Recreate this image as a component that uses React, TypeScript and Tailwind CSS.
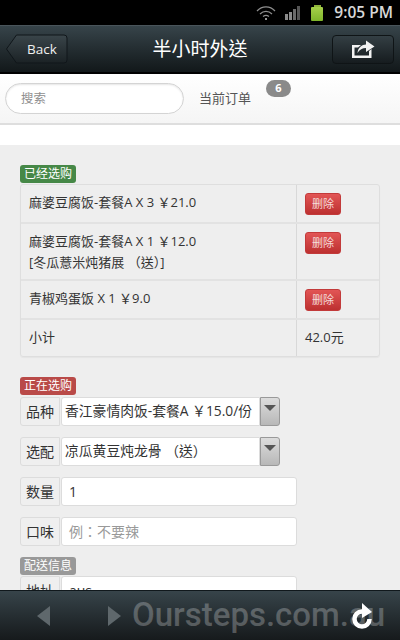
import type { ReactNode } from "react";

const font = { cjk: "font-['Open_Sans','Noto_Sans_CJK_TC',sans-serif]" };

const orderRows = [
  { lines: ["麻婆豆腐饭-套餐A X 3 ￥21.0"], height: "h-[39px]" },
  { lines: ["麻婆豆腐饭-套餐A X 1 ￥12.0", "[冬瓜薏米炖猪展 （送）]"], height: "h-[57px]" },
  { lines: ["青椒鸡蛋饭 X 1 ￥9.0"], height: "h-[39px]" }
];

function StatusBar() {
  return (
    <div className="flex h-[25px] shrink-0 items-center justify-end bg-black pr-[7px]">
      <svg className="mr-[9px]" width="20" height="16" viewBox="0 0 20 16" fill="none" stroke="#8f8f8f" strokeWidth="1.2">
        <path d="M1 6 C6 0.5 14 0.5 19 6" />
        <path d="M4 9 C7.5 5.5 12.5 5.5 16 9" />
        <path d="M7 11.5 C9 10 11 10 13 11.5" />
        <circle cx="10" cy="14" r="1" fill="#c8c8c8" stroke="none" />
      </svg>
      <div className="mr-[11px] flex h-[14px] items-end gap-px">
        <div className="h-[6px] w-[3px] bg-[#8a8a8a]" />
        <div className="h-[8px] w-[3px] bg-[#8a8a8a]" />
        <div className="h-[11px] w-[3px] bg-[#6a6a6a]" />
        <div className="h-[14px] w-[3px] bg-[#555]" />
      </div>
      <div className="mr-[11px] flex flex-col items-center">
        <div className="h-[2px] w-[7px] bg-[#8fb33a]" />
        <div className="h-[14px] w-[12px] rounded-[1px] bg-gradient-to-b from-[#a6d04a] to-[#7fb52a]" />
      </div>
      <span className="font-['Open_Sans',sans-serif] text-[15.5px] leading-none font-semibold text-[#d8d8d8]">9:05 PM</span>
    </div>
  );
}

function BackButton() {
  return (
    <div className="relative flex h-[30px] w-[62px] items-center justify-center pl-[10px] font-['Open_Sans',sans-serif] text-[13.5px] text-[#f0f0f0]">
      <svg className="absolute inset-0" width="62" height="30" viewBox="0 0 62 30">
        <defs>
          <linearGradient id="backFill" x1="0" y1="0" x2="0" y2="1">
            <stop offset="0" stopColor="#3a454a" />
            <stop offset="1" stopColor="#1b2225" />
          </linearGradient>
        </defs>
        <path d="M0.5 15 L10.5 1 H58 Q61 1 61 4 V26 Q61 29 58 29 H10.5 Z" fill="url(#backFill)" stroke="#10161a" />
      </svg>
      <span className="relative">Back</span>
    </div>
  );
}

function NavBar() {
  return (
    <header className="relative flex h-[49px] shrink-0 items-center justify-between border-t border-b-2 border-t-[#4a555b] border-b-black bg-gradient-to-b from-[#37444a] to-[#12181a] px-[6px]">
      <BackButton />
      <h1 className={`pointer-events-none absolute inset-x-0 text-center text-[19px] leading-none text-white ${font.cjk}`}>半小时外送</h1>
      <div className="flex h-[29px] w-[62px] items-center justify-center rounded-[4px] border border-[#0f1416] bg-gradient-to-b from-[#343f44] to-[#161c1f]">
        <svg width="26" height="22" viewBox="0 0 26 22">
          <path d="M2 7 H11 L8 9.5 H4.5 V17.5 H19 V13 L21.5 11 V20 H2 Z" fill="#f2f2f2" />
          <path d="M7.5 15 C8 9.5 12 6.5 16 6.5 V2.5 L24.5 8.5 L16 14 V10 C12.5 10 9.5 11.5 7.5 15 Z" fill="#f2f2f2" />
        </svg>
      </div>
    </header>
  );
}

function SubBar() {
  return (
    <div className="relative flex h-[51px] shrink-0 items-center border-b-2 border-[#dedede] bg-gradient-to-b from-white to-[#f5f5f5] pl-[5px]">
      <input
        className={`h-[31px] w-[179px] rounded-full border border-[#d4d4d4] bg-white pl-[15px] text-[12.5px] shadow-[inset_0_1px_2px_rgba(0,0,0,0.1)] outline-none placeholder:text-[#8f8f8f] ${font.cjk}`}
        placeholder="搜索"
        readOnly
      />
      <span className={`ml-[15px] text-[13px] text-[#555] ${font.cjk}`}>当前订单</span>
      <span className="absolute top-[6px] left-[266px] flex h-[17px] w-[25px] items-center justify-center rounded-full bg-[#8a8a8a] font-['Open_Sans',sans-serif] text-[11px] font-bold text-white">6</span>
    </div>
  );
}

function Badge({ color, children }: { color: string; children: ReactNode }) {
  return (
    <div className={`flex h-[18px] w-[56px] items-center justify-center rounded-[3px] text-[12px] leading-none text-white ${color} ${font.cjk}`}>
      {children}
    </div>
  );
}

function DeleteButton() {
  return (
    <div className="flex h-[22px] w-[36px] items-center justify-center rounded-[3px] border border-[#c23a3a] bg-gradient-to-b from-[#e25555] to-[#bd3030] text-[11px] text-[#f5dcdc]">
      删除
    </div>
  );
}

function OrderTable() {
  return (
    <div className="mt-[1px] w-[360px] rounded-[3px] border border-[#dedede] text-[13px] text-[#333] shadow-[0_1px_1px_rgba(0,0,0,0.04)]">
      {orderRows.map((row) => (
        <div className={`flex border-b-2 border-[#e2e2e2] ${row.height}`} key={row.lines[0]}>
          <div className="w-[276px] border-r border-[#d8d8d8] pt-[7px] pl-[8px] leading-[21px]">
            {row.lines.map((line) => (
              <div key={line}>{line}</div>
            ))}
          </div>
          <div className="pt-[8px] pl-[8px]">
            <DeleteButton />
          </div>
        </div>
      ))}
      <div className="flex h-[36px]">
        <div className="flex w-[276px] items-center border-r border-[#d8d8d8] pl-[8px]">小计</div>
        <div className="flex items-center pl-[8px]">42.0元</div>
      </div>
    </div>
  );
}

function FieldLabel({ children }: { children: ReactNode }) {
  return (
    <div className="flex h-[29px] w-[40px] shrink-0 items-center justify-center rounded-l-[3px] border border-[#dcdcdc] bg-[#efefef] text-[14px] text-[#333]">
      {children}
    </div>
  );
}

function SelectField({ label, value }: { label: string; value: string }) {
  return (
    <div className="flex w-[260px]">
      <FieldLabel>{label}</FieldLabel>
      <div className="ml-px flex h-[29px] min-w-0 flex-1 items-center overflow-hidden rounded-l-[3px] border border-[#dcdcdc] bg-white pl-[3px] text-[13.8px] whitespace-nowrap text-[#333]">
        {value}
      </div>
      <div className="flex h-[29px] w-[20px] shrink-0 justify-center rounded-r-[3px] border border-[#999] bg-gradient-to-b from-[#dcdcdc] to-[#b8b8b8] pt-[7px]">
        <div className="h-0 w-0 border-x-[6px] border-t-[6px] border-x-transparent border-t-[#555]" />
      </div>
    </div>
  );
}

function TextField({ label, value, placeholder }: { label: string; value?: string; placeholder?: string }) {
  return (
    <div className="flex w-[277px]">
      <FieldLabel>{label}</FieldLabel>
      <div className={`ml-px flex h-[29px] flex-1 items-center rounded-[3px] border border-[#dcdcdc] bg-white pl-[7px] text-[14px] ${value ? "text-[#333]" : "text-[#999]"}`}>
        {value ?? placeholder}
      </div>
    </div>
  );
}

function BottomBar() {
  return (
    <footer className="relative flex h-[50px] shrink-0 items-center overflow-hidden border-t border-[#10181c] bg-gradient-to-b from-[#37444a] to-[#161a1c]">
      <div className="absolute left-[37px] h-0 w-0 border-y-[10px] border-r-[13px] border-y-transparent border-r-[#5f686c]" />
      <div className="absolute left-[108px] h-0 w-0 border-y-[10px] border-l-[13px] border-y-transparent border-l-[#5f686c]" />
      <span className="absolute top-[-1px] left-[132px] font-['Roboto',sans-serif] text-[33px] leading-[50px] font-medium whitespace-nowrap text-white/25">
        Oursteps.com.au
      </span>
      <svg className="absolute top-[10px] left-[350px]" width="26" height="30" viewBox="0 0 26 30" fill="none">
        <path d="M12 10.5 A7.5 7.5 0 1 0 19.5 18" stroke="#fff" strokeWidth="4.5" />
        <path d="M12 2 L22 11 L12 17 Z" fill="#fff" />
      </svg>
    </footer>
  );
}

export default function App() {
  return (
    <div className={`flex h-[640px] w-[400px] flex-col overflow-hidden bg-[#eeeeee] ${font.cjk}`}>
      <StatusBar />
      <NavBar />
      <SubBar />
      <main className="min-h-0 flex-1 overflow-hidden">
        <div className="h-[20px] bg-white" />
        <div className="px-[20px] pt-[20px]">
          <Badge color="bg-[#468847]">已经选购</Badge>
          <OrderTable />
          <div className="mt-[20px]">
            <Badge color="bg-[#b94a48]">正在选购</Badge>
          </div>
          <div className="mt-[2px] flex flex-col gap-[11px]">
            <SelectField label="品种" value="香江豪情肉饭-套餐A ￥15.0/份" />
            <SelectField label="选配" value="凉瓜黄豆炖龙骨 （送）" />
            <TextField label="数量" value="1" />
            <TextField label="口味" placeholder="例：不要辣" />
          </div>
          <div className="mt-[11px]">
            <Badge color="bg-[#999999]">配送信息</Badge>
          </div>
          <div className="mt-[1px]">
            <TextField label="地址" value="aus" />
          </div>
        </div>
      </main>
      <BottomBar />
    </div>
  );
}
